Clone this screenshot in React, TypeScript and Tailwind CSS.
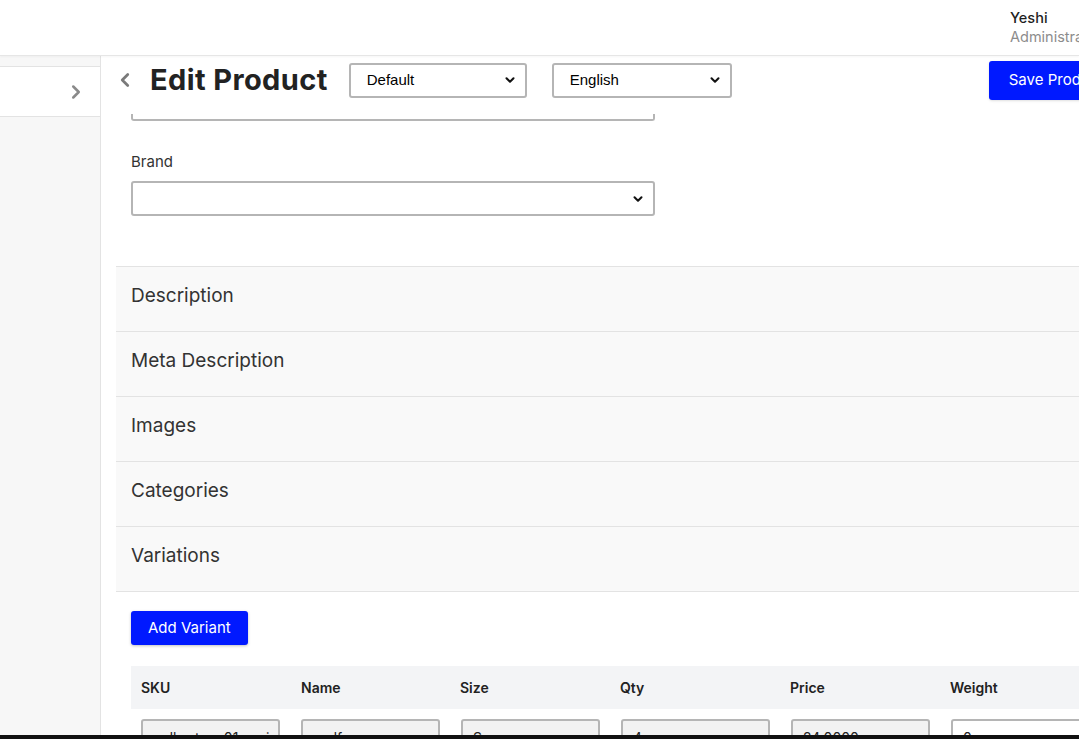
import { ChevronLeft, ChevronRight, ChevronDown } from "lucide-react"

const sections = ["Description", "Meta Description", "Images", "Categories", "Variations"]

function FakeSelect({ value, width }: { value: string; width: string }) {
    return (
        <div className={`${width} h-[35px] shrink-0 flex items-center justify-between pl-4 pr-2 border-2 border-[#b5b5b5] rounded-[3px] bg-white text-[15px] text-black font-['Liberation_Sans',Arial,sans-serif]`}>
            <span>{value}</span>
            <ChevronDown size={14} strokeWidth={3.5} className="text-[#111]" />
        </div>
    )
}

export default function App() {
    return (
        <div className="w-[1079px] h-[739px] overflow-hidden flex flex-col bg-white font-['Inter',sans-serif] text-[#333]">
            <header className="h-[56px] shrink-0 flex justify-end border-b border-[#e6e6e6] shadow-[0_1px_2px_rgba(0,0,0,0.04)] relative z-10">
                <div className="w-[69px] overflow-hidden whitespace-nowrap pt-[8px] leading-[19px] text-[14.5px]">
                    <p className="text-[#1f1f1f] font-medium">Yeshi</p>
                    <p className="text-[#8c8c8c]">Administrator</p>
                </div>
            </header>

            <div className="flex flex-1 min-h-0">
                <aside className="w-[101px] shrink-0 bg-[#f7f7f7] border-r border-[#e3e3e3] pt-[10px]">
                    <div className="h-[51px] bg-white border-y border-[#e3e3e3] flex items-center justify-end pr-[13px]">
                        <ChevronRight size={22} strokeWidth={2.75} className="text-[#8a8a8a]" />
                    </div>
                </aside>

                <main className="flex-1 min-w-0 overflow-hidden">
                    <div className="w-[1200px]">
                        <div className="h-[48px] flex items-center pl-[13px]">
                            <ChevronLeft size={22} strokeWidth={3} className="text-[#7a7a7a]" />
                            <h1 className="ml-[14px] text-[29px] font-bold tracking-[0.4px] text-[#222]">Edit Product</h1>
                            <div className="ml-[21px]">
                                <FakeSelect value="Default" width="w-[178px]" />
                            </div>
                            <div className="ml-[25px]">
                                <FakeSelect value="English" width="w-[180px]" />
                            </div>
                            <button className="ml-[257px] h-[39px] px-[20px] rounded-[3px] bg-[#0019ff] text-white text-[15px] whitespace-nowrap shadow-sm">
                                Save Product
                            </button>
                        </div>

                        <div className="ml-[30px] mt-[10px] w-[524px] h-[7px] border-2 border-t-0 border-[#b5b5b5] rounded-b-[3px]" />

                        <div className="pl-[30px] pt-[31px]">
                            <label className="block text-[15px] leading-[20px] text-[#333]">Brand</label>
                            <div className="mt-[9px] w-[524px] h-[35px] flex items-center justify-end pr-2 border-2 border-[#b5b5b5] rounded-[3px]">
                                <ChevronDown size={14} strokeWidth={3.5} className="text-[#111]" />
                            </div>
                        </div>

                        <div className="ml-[15px] mt-[50px] border-b border-[#e3e3e3]">
                            {sections.map((s) => (
                                <div key={s} className="h-[65px] flex items-center pl-[15px] pb-[5px] border-t border-[#e3e3e3] bg-[#f9f9f9] text-[19px] text-[#333]">
                                    {s}
                                </div>
                            ))}
                        </div>

                        <div className="pl-[30px] pt-[19px]">
                            <button className="h-[34px] px-[17px] rounded-[3px] bg-[#0019ff] text-white text-[15px] shadow-[0_1px_3px_rgba(0,0,0,0.25)]">
                                Add Variant
                            </button>

                            <div className="mt-[21px] w-[1000px]">
                                <div className="h-[43px] flex items-center bg-[#f3f4f6] pl-[10px] text-[14px] font-semibold text-[#222]">
                                    <span className="w-[160px]">SKU</span>
                                    <span className="w-[159px]">Name</span>
                                    <span className="w-[160px]">Size</span>
                                    <span className="w-[170px]">Qty</span>
                                    <span className="w-[160px]">Price</span>
                                    <span className="w-[160px]">Weight</span>
                                </div>
                                <div className="flex pl-[10px] pt-[10px] gap-[21px] text-[14px] leading-[18px] text-[#222]">
                                    <div className="w-[139px] h-[36px] border-2 border-[#b5b5b5] rounded-[3px] bg-[#f2f2f2] px-[8px] pt-[8px] overflow-hidden whitespace-nowrap">ordhurtops01-variant</div>
                                    <div className="w-[139px] h-[36px] border-2 border-[#b5b5b5] rounded-[3px] bg-[#f2f2f2] px-[18px] pt-[8px]">sdfsa</div>
                                    <div className="w-[139px] h-[36px] border-2 border-[#b5b5b5] rounded-[3px] bg-[#f2f2f2] px-[10px] pt-[8px]">S</div>
                                    <div className="w-[149px] h-[36px] border-2 border-[#b5b5b5] rounded-[3px] bg-[#f2f2f2] px-[10px] pt-[8px] flex justify-between">
                                        <span>4</span>
                                        <span className="text-[#777] text-[11px] pt-[5px]">▼</span>
                                    </div>
                                    <div className="w-[139px] h-[36px] border-2 border-[#b5b5b5] rounded-[3px] bg-[#f2f2f2] px-[10px] pt-[8px]">24.0000</div>
                                    <div className="w-[139px] h-[36px] border-2 border-[#b5b5b5] rounded-[3px] bg-white px-[10px] pt-[8px]">0</div>
                                </div>
                            </div>
                        </div>
                    </div>
                </main>
            </div>

            <div className="h-[4px] shrink-0 bg-[#111]" />
        </div>
    )
}
